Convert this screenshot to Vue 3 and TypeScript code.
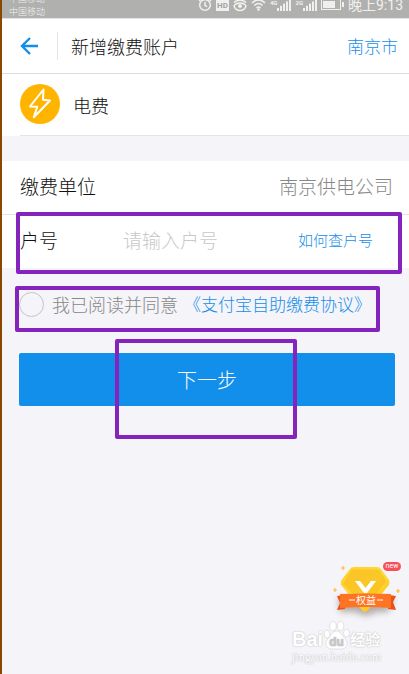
<script setup lang="ts">
import { ref } from 'vue'

const account = ref('')
const agreed = ref(false)
const bars: number[] = [0, 1, 2, 3, 4]
const networks: string[] = ['4G', '2G']
</script>

<template>
  <div class="screen">
    <div class="status">
      <div class="carriers"><span>中国移动</span><span>中国移动</span></div>
      <div class="indicators">
        <svg class="ind" width="14" height="14" viewBox="0 0 14 14">
          <circle cx="7" cy="7" r="5.300" />
          <path d="M7 4v3.500l2.200 1.200M1 3l2.400-2M13 3l-2.400-2" />
        </svg>
        <span class="hd">HD</span>
        <svg class="ind" width="14" height="14" viewBox="0 0 14 14">
          <path d="M1 4.500c3-3 9-3 12 0M1 8c2-4 10-4 12 0-2 6-10 6-12 0z" />
          <circle cx="7" cy="8" r="2" class="solid" />
        </svg>
        <svg class="ind" width="15" height="14" viewBox="0 0 15 14">
          <path d="M1 5c4-4 9-4 13 0M3.300 7.500c2.800-2.700 5.600-2.700 8.400 0M5.400 10c1.500-1.300 2.700-1.300 4.200 0" />
          <circle cx="7.500" cy="11.500" r="1.300" class="solid" />
        </svg>
        <span v-for="n in networks" :key="n" class="signal">
          <small>{{ n }}</small>
          <svg width="14" height="12" viewBox="0 0 14 12">
            <rect v-for="b in bars" :key="b" :x="b * 3" :y="9 - b * 2.2" width="2" :height="3 + b * 2.2" />
          </svg>
        </span>
        <svg class="battery" width="23" height="12" viewBox="0 0 23 12">
          <rect x="0.500" y="0.500" width="19" height="10" class="shell" />
          <rect x="2" y="2" width="12" height="7" />
          <rect x="21" y="3" width="2" height="5" />
        </svg>
        <time>晚上9:13</time>
      </div>
    </div>

    <header class="header">
      <button class="back" type="button" aria-label="返回">
        <svg width="20" height="20" viewBox="0 0 20 20"><path d="M18 10H2.500M10 2L2 10l8 8" /></svg>
      </button>
      <h1>新增缴费账户</h1>
      <a class="city" href="#">南京市</a>
    </header>

    <main>
      <section class="service">
        <svg width="40" height="40" viewBox="0 0 40 40">
          <circle cx="20" cy="20" r="20" fill="#ffb400" />
          <path d="M23.500 5.500L10 22.500l7.200.2-3.400 10.500L30 16.500l-7-.7z" />
        </svg>
        <h2>电费</h2>
      </section>

      <form @submit.prevent>
        <div class="fields">
          <div class="row">
            <span>缴费单位</span>
            <span class="company">南京供电公司</span>
          </div>
          <div class="row entry">
            <label for="account">户号</label>
            <input id="account" v-model="account" type="text" placeholder="请输入户号" />
            <a href="#">如何查户号</a>
            <i class="mark mark-entry"></i>
          </div>
        </div>
        <div class="agreement">
          <input id="agree" v-model="agreed" type="checkbox" />
          <label for="agree">我已阅读并同意</label>
          <a href="#">《支付宝自助缴费协议》</a>
          <i class="mark mark-agreement"></i>
        </div>
        <div class="action">
          <button type="submit">下一步</button>
          <i class="mark mark-action"></i>
        </div>
      </form>
    </main>

    <a class="benefits" href="#" aria-label="权益">
      <svg width="72" height="66" viewBox="0 0 72 66">
        <defs>
          <linearGradient id="gold" x1="0" y1="0" x2="1" y2="1">
            <stop offset="0" stop-color="#ffcf2e" />
            <stop offset="0.500" stop-color="#ffd93b" />
            <stop offset="1" stop-color="#ffbd08" />
          </linearGradient>
          <filter id="soft" x="-30%" y="-30%" width="160%" height="160%"><feGaussianBlur stdDeviation="3" /></filter>
        </defs>
        <path d="M8 36h56l-6 14H48L36 54 24 50H10z" fill="#6b5747" opacity="0.450" filter="url(#soft)" />
        <path d="M20 7q1.500-2 4-2h23q2.500 0 4 2l8 11q1 2 0 5L38 48q-3 3-6 0L11 23q-1-3 .5-5z" fill="url(#gold)" />
        <path d="M21 9q1-1.500 3-1.500h23q2 0 3 1.500l6 10-17 22H32L13 22z" fill="#f3b414" opacity="0.450" />
        <path d="M25 19h5l5.500 7 5.500-7h5L37 31h-3z" fill="#fff" />
        <path d="M7 34l8-1v14l-8 1 3-7zM58 33l8 1-3 6 3 8-8-1z" fill="#e95216" />
        <path d="M10 32q26-1 51 0v14q-25-2-51 0z" fill="#ff7424" />
        <path d="M19 38h6M47 38h6" stroke="#fff" stroke-width="1.200" />
        <path d="M13 4v4M11 6h4M5 26v4M3 28h4M68 27v4M66 29h4" stroke="#ffbd3d" stroke-width="1.200" />
        <text x="36" y="42" text-anchor="middle" class="benefit-text">权益</text>
      </svg>
      <span class="new">new</span>
    </a>

    <div class="watermark">
      <div class="brand">
        <span>Bai</span>
        <svg width="27" height="30" viewBox="0 0 27 30">
          <ellipse cx="4" cy="14" rx="3" ry="4" />
          <ellipse cx="10" cy="6" rx="3.300" ry="4.500" />
          <ellipse cx="17.500" cy="6" rx="3.300" ry="4.500" />
          <ellipse cx="23.500" cy="13" rx="3" ry="4" />
          <path d="M13.500 11c4 0 5 4 8 7 5 5 2 11-3 11h-10c-5 0-8-6-3-11 3-3 4-7 8-7z" />
          <text x="13.500" y="26" text-anchor="middle">du</text>
        </svg>
        <span class="cn">经验</span>
      </div>
      <div class="domain">jingyan.baidu.com</div>
    </div>
  </div>
</template>

<style>
body {
  background: #f4f4f9;
}
</style>

<style scoped>
* {
  box-sizing: border-box;
}
.screen {
  position: relative;
  min-height: 100vh;
  border-left: 2px solid #8a4700;
  background: #f4f4f9;
  color: #111;
  font-family: "Noto Sans CJK SC", sans-serif;
  font-weight: 300;
  overflow: hidden;
}
a {
  color: #158eea;
  text-decoration: none;
}
h1,
h2 {
  margin: 0;
  font-size: 18px;
  font-weight: 300;
}
button,
input {
  font: inherit;
}
.status {
  display: flex;
  justify-content: space-between;
  align-items: flex-end;
  height: 19px;
  padding: 0 6px 0 7px;
  border-bottom: 1px solid #e4e4e2;
  background: #b0b0ae;
  color: #f0f0ee;
  overflow: hidden;
}
.carriers {
  display: flex;
  flex-direction: column;
  font-size: 9px;
  line-height: 13px;
}
.indicators {
  display: flex;
  align-items: center;
  gap: 4px;
  height: 26px;
}
.indicators svg {
  fill: #f0f0ee;
}
.indicators .ind {
  fill: none;
  stroke: #f0f0ee;
  stroke-width: 1.5;
}
.indicators .solid {
  fill: #f0f0ee;
  stroke: none;
}
.indicators .shell {
  fill: none;
  stroke: #f0f0ee;
}
.hd {
  padding: 0 1px;
  background: #f0f0ee;
  color: #a4a4a2;
  font: 700 8px/11px Roboto, sans-serif;
}
.signal {
  display: flex;
  align-items: flex-start;
}
.signal small {
  padding-top: 1px;
  font: 700 6px/6px Roboto, sans-serif;
}
time {
  font-family: Roboto, "Noto Sans CJK SC", sans-serif;
  font-size: 14px;
  font-weight: 400;
  line-height: 16px;
}
.header {
  display: flex;
  align-items: center;
  height: 55px;
  padding-right: 11px;
  border-bottom: 1px solid #dededf;
  background: #fff;
}
.city {
  padding-bottom: 2px;
}
.back {
  display: flex;
  align-items: center;
  width: 56px;
  height: 28px;
  margin-right: 13px;
  padding: 0 0 0 18px;
  border: 0;
  border-right: 1px solid #e5e5e5;
  background: none;
}
.back svg {
  fill: none;
  stroke: #158eea;
  stroke-width: 2.4;
}
.city {
  margin-left: auto;
  font-size: 17px;
}
.service {
  display: flex;
  align-items: center;
  gap: 13px;
  height: 62px;
  padding: 0 18px 2px;
  background: linear-gradient(#e4e4e8, #e4e4e8) 18px 100% / 100% 1px no-repeat #fff;
}
.service path {
  fill: none;
  stroke: #fff;
  stroke-width: 2;
  stroke-linejoin: round;
}
.service h2 {
  padding-top: 2px;
}
.fields {
  margin-top: 25px;
  background: #fff;
}
.row {
  display: flex;
  align-items: center;
  justify-content: space-between;
  height: 53px;
  padding: 0 16px 4px 18px;
  font-size: 19px;
}
.company {
  color: #888;
}
.entry {
  position: relative;
  height: 54px;
  padding-right: 36px;
  border-top: 1px solid #e4e4e8;
}
.entry label {
  flex: 0 0 103px;
}
.entry input {
  flex: 1;
  min-width: 0;
  padding: 0;
  border: 0;
  outline: 0;
  background: none;
}
.entry input::placeholder {
  color: #c8c8c8;
}
.entry a {
  font-size: 15px;
}
.agreement {
  position: relative;
  display: flex;
  align-items: center;
  height: 37px;
  margin-top: 18px;
  padding-left: 17px;
}
.agreement input {
  appearance: none;
  width: 25px;
  height: 25px;
  margin: 0 8px 0 0;
  border: 1px solid #c4c4c6;
  border-radius: 50%;
}
.agreement input:checked {
  background: #158eea;
}
.agreement label,
.agreement a {
  padding-bottom: 2px;
}
.agreement label {
  margin-right: 6px;
  color: #888;
  font-size: 18px;
}
.agreement a {
  font-size: 17px;
  white-space: nowrap;
}
.action {
  position: relative;
  margin: 30px 14px 0 17px;
}
.action button {
  width: 100%;
  height: 53px;
  padding: 0;
  border: 0;
  border-radius: 2px;
  background: #128eeb;
  color: #fff;
  font-size: 20px;
}
.mark {
  position: absolute;
  border: 4px solid #8424bd;
  border-radius: 2px;
  pointer-events: none;
}
.mark-entry {
  inset: -3px 7px -6px 14px;
}
.mark-agreement {
  top: 0;
  left: 13px;
  width: 365px;
  height: 46px;
}
.mark-action {
  top: -14px;
  left: 50%;
  width: 182px;
  height: 100px;
  margin-left: -92px;
}
.benefits {
  position: absolute;
  right: 7px;
  bottom: 46px;
}
.benefits svg {
  display: block;
}
.benefit-text {
  fill: #fff;
  font-size: 10px;
  font-weight: 400;
}
.new {
  position: absolute;
  top: 0;
  right: 1px;
  width: 18px;
  border-radius: 5px;
  background: #f5515b;
  color: #fff;
  font: 7px/9px Roboto, sans-serif;
  text-align: center;
}
.watermark {
  position: absolute;
  right: 28px;
  bottom: 10px;
  width: 89px;
  color: #fff;
  text-shadow: 0 0 1px #bbb, 0 0 2px #ccc;
}
.brand {
  display: flex;
  align-items: flex-end;
  height: 30px;
  font: 700 20px/22px "Liberation Sans", sans-serif;
}
.brand svg {
  flex: none;
  fill: #fff;
  stroke: #d0d0d2;
  stroke-width: 0.6;
}
.brand text {
  fill: #c8c8ca;
  font-size: 12px;
  stroke: none;
}
.brand .cn {
  font-family: "Noto Sans CJK SC", sans-serif;
  font-size: 15px;
}
.domain {
  font: 12px/14px "Liberation Serif", serif;
}
</style>
